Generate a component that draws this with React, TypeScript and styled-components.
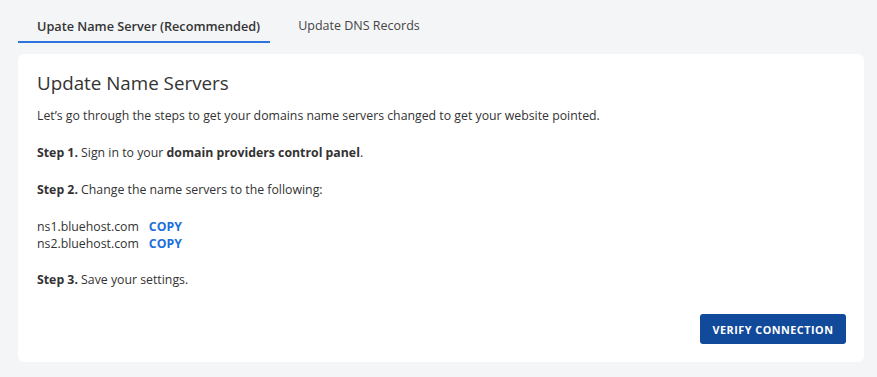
import React from "react";
import styled, { createGlobalStyle } from "styled-components";

const Global = createGlobalStyle`
  html, body { margin: 0; padding: 0; background: #f4f5f7; }
  body { font-family: "Open Sans", "Liberation Sans", sans-serif; color: #333; }
  * { box-sizing: border-box; }
`;

const Page = styled.div`
  padding: 0 13px 0 18px;
  height: 377px;
`;

const TabBar = styled.div`
  display: flex;
  height: 54px;
  padding-top: 14px;
  align-items: flex-start;
`;

const Tab = styled.button<{ $active?: boolean }>`
  font-family: inherit;
  background: none;
  border: none;
  margin: 0 ${(p) => (p.$active ? "28px" : "0")} 0 0;
  cursor: pointer;
  font-size: ${(p) => (p.$active ? "12.7px" : "12.5px")};
  line-height: 24px;
  padding: ${(p) => (p.$active ? "0 10px 3px 19px" : "0 0 3px")};
  font-weight: ${(p) => (p.$active ? 600 : 400)};
  color: ${(p) => (p.$active ? "#333" : "#444")};
  border-bottom: 2px solid ${(p) => (p.$active ? "#2f74de" : "transparent")};
`;

const Card = styled.div`
  background: #fff;
  border-radius: 6px;
  padding: 17px 18px 18px 19px;
  height: 308px;
  display: flex;
  flex-direction: column;
`;

const Title = styled.h2`
  margin: 0 0 12px;
  font-size: 18.8px;
  font-weight: 500;
  line-height: 24px;
  color: #333;
`;

const Para = styled.p`
  margin: 0 0 19px;
  font-size: 12.3px;
  line-height: 18px;
  color: #333;
`;

const NsList = styled.div`
  display: flex;
  flex-direction: column;
  margin-bottom: 19px;
`;

const NsRow = styled.div`
  display: flex;
  font-size: 12.3px;
  line-height: 17px;
  gap: 10px;
`;

const Copy = styled.button`
  font-family: inherit;
  background: none;
  border: none;
  padding: 0;
  font-size: 12.3px;
  font-weight: 700;
  color: #1d6fdc;
  cursor: pointer;
  line-height: 17px;
`;

const Footer = styled.div`
  margin-top: auto;
  display: flex;
  justify-content: flex-end;
`;

const Verify = styled.button`
  font-family: inherit;
  background: #124a9b;
  color: #fff;
  border: none;
  border-radius: 3px;
  height: 30px;
  width: 146px;
  padding: 0;
  font-size: 10.8px;
  font-weight: 700;
  letter-spacing: 0.5px;
  cursor: pointer;
`;

export default function App() {
  return (
    <>
      <Global />
      <Page>
        <TabBar>
          <Tab $active>Upate Name Server (Recommended)</Tab>
          <Tab>Update DNS Records</Tab>
        </TabBar>
        <Card>
          <Title>Update Name Servers</Title>
          <Para>
            Let’s go through the steps to get your domains name servers changed to get your website pointed.
          </Para>
          <Para>
            <b>Step 1.</b> Sign in to your <b>domain providers control panel</b>.
          </Para>
          <Para>
            <b>Step 2.</b> Change the name servers to the following:
          </Para>
          <NsList>
            <NsRow>
              <span>ns1.bluehost.com</span>
              <Copy>COPY</Copy>
            </NsRow>
            <NsRow>
              <span>ns2.bluehost.com</span>
              <Copy>COPY</Copy>
            </NsRow>
          </NsList>
          <Para>
            <b>Step 3.</b> Save your settings.
          </Para>
          <Footer>
            <Verify>VERIFY CONNECTION</Verify>
          </Footer>
        </Card>
      </Page>
    </>
  );
}
